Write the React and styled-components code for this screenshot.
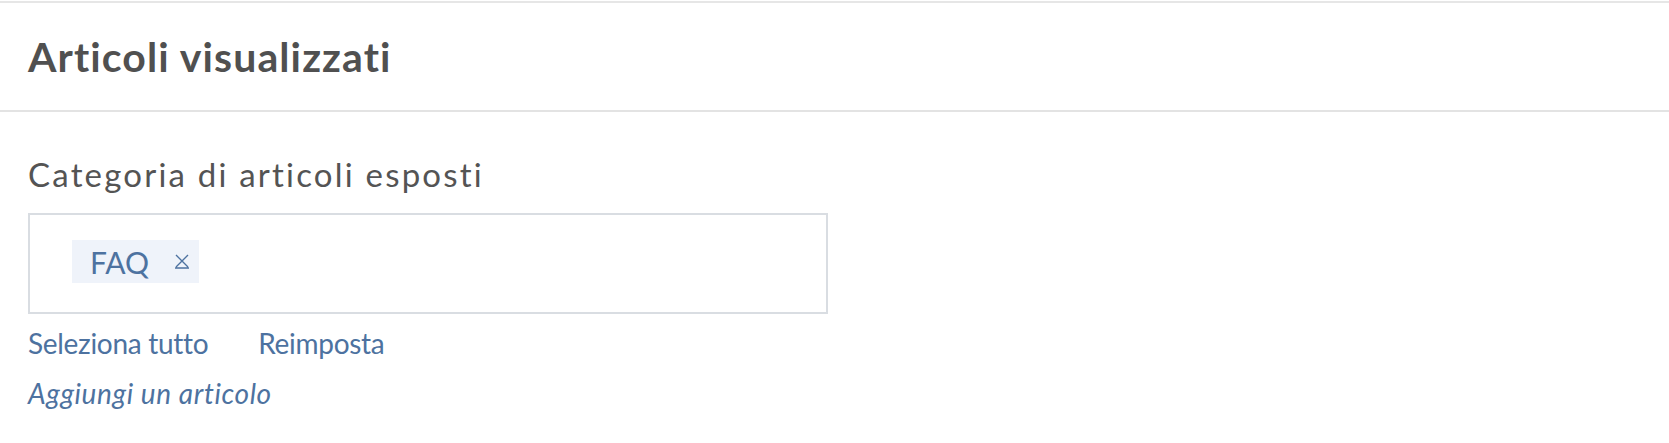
import React from 'react'
import styled, { createGlobalStyle } from 'styled-components'

const GlobalStyle = createGlobalStyle`
    * { box-sizing: border-box; }
    body {
        margin: 0;
        background: #fff;
        font-family: Lato, "Noto Sans", sans-serif;
    }
`

const Page = styled.div`
    padding-top: 1px;
`

const Header = styled.div`
    height: 111px;
    display: flex;
    align-items: center;
    padding: 0 28px;
    border-top: 2px solid #e6e6e6;
    border-bottom: 2px solid #e3e3e3;

    h1 {
        margin: 0;
        font-size: 41px;
        font-weight: 700;
        letter-spacing: 1.1px;
        color: #505050;
    }
`

const Body = styled.div`
    padding: 42px 28px 0;
`

const Label = styled.div`
    font-size: 33px;
    line-height: 40px;
    letter-spacing: 2.2px;
    color: #545454;
    margin-bottom: 19px;
`

const SelectBox = styled.div`
    width: 800px;
    height: 101px;
    border: 2px solid #d9dde2;
    display: flex;
    align-items: flex-start;
    padding: 25px 0 0 42px;
`

const Chip = styled.div`
    height: 43px;
    display: flex;
    align-items: center;
    gap: 25px;
    padding: 0 9px 0 18px;
    background: #eff3fa;
    color: #4d72a0;
    font-size: 30px;

    svg {
        display: block;
    }
`

const Links = styled.div`
    display: flex;
    gap: 50px;
    margin-top: 11px;
`

const LinkText = styled.a`
    font-size: 28px;
    line-height: 36px;
    color: #4d72a0;
    font-style: ${props => props.italic ? 'italic' : 'normal'};
    letter-spacing: ${props => props.italic ? '0.6px' : '-0.3px'};
    cursor: pointer;
    text-decoration: none;
`

const AddRow = styled.div`
    margin-top: 14px;
`

const CloseIcon = () => (
    <svg width="16" height="15" viewBox="0 0 16 15" fill="none" stroke="#4d72a0" strokeWidth="1.4">
        <path d="M2 1 L14 13 M14 1 L2 13 M1 14 L15 14" />
    </svg>
)

const App = () => {
    return (
        <>
            <GlobalStyle />
            <Page>
                <Header>
                    <h1>Articoli visualizzati</h1>
                </Header>
                <Body>
                    <Label>Categoria di articoli esposti</Label>
                    <SelectBox>
                        <Chip>
                            <span>FAQ</span>
                            <CloseIcon />
                        </Chip>
                    </SelectBox>
                    <Links>
                        <LinkText>Seleziona tutto</LinkText>
                        <LinkText>Reimposta</LinkText>
                    </Links>
                    <AddRow>
                        <LinkText italic>Aggiungi un articolo</LinkText>
                    </AddRow>
                </Body>
            </Page>
        </>
    )
}

export default App
